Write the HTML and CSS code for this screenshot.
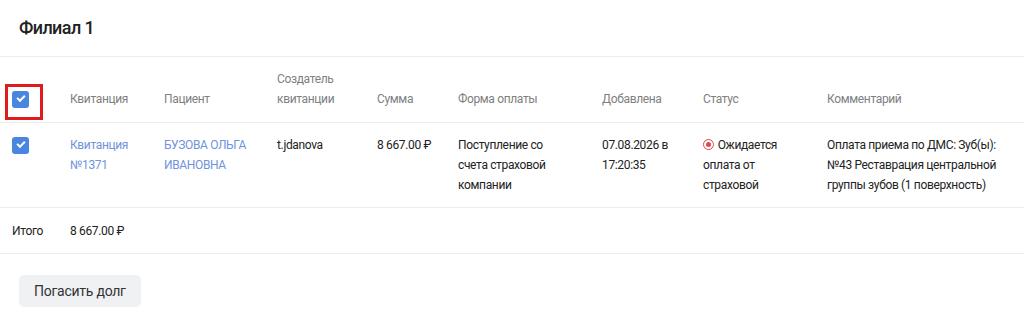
FILE: index.html
```html
<!DOCTYPE html>
<html lang="ru">
<head>
    <meta charset="UTF-8">
    <meta name="viewport" content="width=device-width, initial-scale=1.0">
    <title>Филиал 1</title>
    <link rel="stylesheet" href="styles.css">
</head>
<body>
    <div class="branch">
        <h2 class="branch-title">Филиал 1</h2>

        <table class="receipts">
            <colgroup>
                <col class="col-check">
                <col class="col-number">
                <col class="col-patient">
                <col class="col-author">
                <col class="col-sum">
                <col class="col-method">
                <col class="col-date">
                <col class="col-status">
                <col>
            </colgroup>
            <thead>
                <tr>
                    <th class="cell-check">
                        <span class="check-focus"><span class="check"></span></span>
                    </th>
                    <th>Квитанция</th>
                    <th>Пациент</th>
                    <th>Создатель квитанции</th>
                    <th>Сумма</th>
                    <th>Форма оплаты</th>
                    <th>Добавлена</th>
                    <th>Статус</th>
                    <th>Комментарий</th>
                </tr>
            </thead>
            <tbody>
                <tr>
                    <td class="cell-check"><span class="check"></span></td>
                    <td><a href="#">Квитанция №1371</a></td>
                    <td><a href="#">БУЗОВА ОЛЬГА ИВАНОВНА</a></td>
                    <td>t.jdanova</td>
                    <td>8 667.00 ₽</td>
                    <td class="cell-method">Поступление со счета страховой компании</td>
                    <td>07.08.2026 в 17:20:35</td>
                    <td class="cell-status"><span class="status-dot"></span> Ожидается оплата от страховой</td>
                    <td>Оплата приема по ДМС: Зуб(ы): №43 Реставрация центральной группы зубов (1 поверхность)</td>
                </tr>
                <tr class="total">
                    <td class="cell-check">Итого</td>
                    <td colspan="8">8 667.00 ₽</td>
                </tr>
            </tbody>
        </table>

        <div class="actions">
            <button type="button" class="btn">Погасить долг</button>
        </div>
    </div>
</body>
</html>
```

FILE: styles.css
```css
* {
    margin: 0;
    padding: 0;
    box-sizing: border-box;
}

body {
    background: #fff;
    font-family: 'Roboto', 'Noto Sans', sans-serif;
    color: #222;
}

.branch-title {
    height: 57px;
    padding: 16px 19px 0;
    font-size: 18px;
    font-weight: 500;
    line-height: 24px;
    letter-spacing: -0.6px;
    color: #222;
    border-bottom: 1px solid #ececec;
}

.receipts {
    width: 100%;
    border-collapse: collapse;
    table-layout: fixed;
    font-size: 12px;
    line-height: 20px;
    letter-spacing: -0.35px;
}

.col-check { width: 70px; }
.col-number { width: 94px; }
.col-patient { width: 113px; }
.col-author { width: 100px; }
.col-sum { width: 81px; }
.col-method { width: 144px; }
.col-date { width: 101px; }
.col-status { width: 124px; }

.receipts th {
    height: 65px;
    padding: 0 12px 13px 0;
    text-align: left;
    vertical-align: bottom;
    font-weight: 400;
    color: #808080;
    border-bottom: 1px solid #ececec;
}

.receipts td {
    padding: 12px 12px 12px 0;
    vertical-align: top;
    border-bottom: 1px solid #ececec;
}

.receipts .total td {
    padding-top: 13px;
}

.receipts .cell-check {
    padding-left: 12px;
}

.receipts .cell-method {
    padding-right: 38px;
}

.receipts .cell-status {
    padding-right: 20px;
}

.receipts a {
    color: #6f93dc;
    text-decoration: none;
}

.check {
    display: inline-block;
    position: relative;
    width: 17px;
    height: 17px;
    margin-top: 2px;
    border-radius: 3px;
    background: #4a86e0;
    vertical-align: top;
}

/* галочка */
.check::after {
    content: '';
    position: absolute;
    left: 5px;
    top: 4px;
    width: 6px;
    height: 3px;
    border-left: 2px solid #fff;
    border-bottom: 2px solid #fff;
    transform: rotate(-45deg);
}

.check-focus {
    display: inline-block;
    position: relative;
    vertical-align: top;
}

.check-focus::before {
    content: '';
    position: absolute;
    left: -7px;
    top: -5px;
    width: 32px;
    height: 30px;
    border: 3px solid #e01b1b;
}

.status-dot {
    display: inline-block;
    position: relative;
    width: 11px;
    height: 11px;
    margin-right: 1px;
    border: 1px solid #e0464a;
    border-radius: 50%;
    vertical-align: -1px;
}

.status-dot::after {
    content: '';
    position: absolute;
    left: 2px;
    top: 2px;
    width: 5px;
    height: 5px;
    border-radius: 50%;
    background: #e0464a;
}

.actions {
    padding: 21px 19px;
}

.btn {
    height: 32px;
    padding: 0 15px;
    background: #f0f1f3;
    border: none;
    border-radius: 5px;
    font-family: inherit;
    font-size: 14px;
    letter-spacing: -0.25px;
    color: #333;
    cursor: pointer;
}
```
